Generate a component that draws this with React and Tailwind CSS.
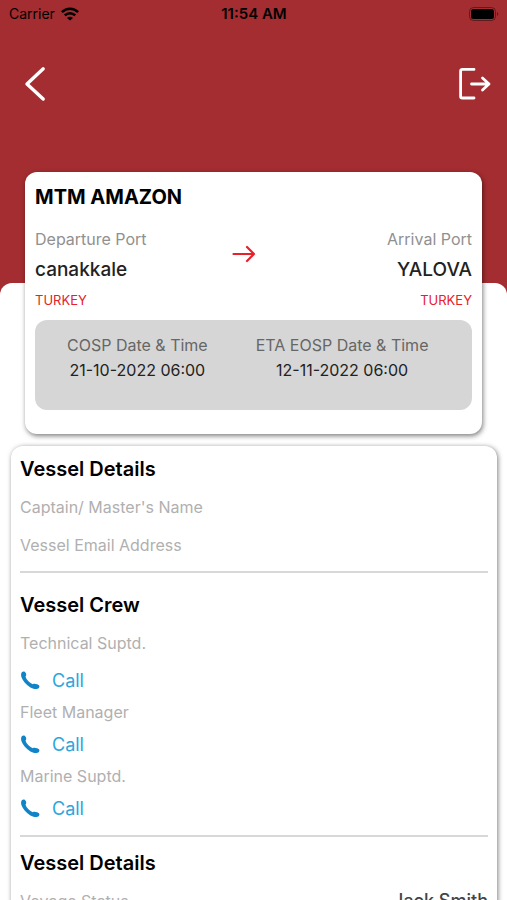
import React from "react";

const crew = [
  { role: "Technical Suptd." },
  { role: "Fleet Manager" },
  { role: "Marine Suptd." },
];

const StatusBar = () => {
  return (
    <div className="h-7 shrink-0 grid grid-cols-3 items-center pl-[9px] pr-2 text-black">
      <div className="flex items-center gap-1.5 text-sm">
        <span>Carrier</span>
        <svg className="w-[18px] h-[14px]" viewBox="0 0 18 14" fill="none" stroke="#000" strokeWidth="2.6">
          <path d="M0.9 5.2C5.4 0.6 12.6 0.6 17.1 5.2" />
          <path d="M3.8 8.4C6.8 5.5 11.2 5.5 14.2 8.4" />
          <path d="M9 13.6L6 10.9C7.8 9.3 10.2 9.3 12 10.9Z" fill="#000" stroke="none" />
        </svg>
      </div>
      <div className="text-center text-[15px] font-semibold">11:54 AM</div>
      <div className="flex justify-end">
        <svg className="w-[30px] h-[14px]" viewBox="0 0 30 14">
          <rect x="0.5" y="0.5" width="26" height="13" rx="4" fill="none" stroke="#000" strokeOpacity="0.4" />
          <rect x="2" y="2" width="23" height="10" rx="2.5" fill="#000" />
          <path d="M28 5C29.6 5.6 29.6 8.4 28 9Z" fill="#000" fillOpacity="0.45" />
        </svg>
      </div>
    </div>
  );
};

const NavBar = () => {
  return (
    <div className="h-28 shrink-0 flex items-center justify-between pl-6 pr-4">
      <button type="button" aria-label="Back">
        <svg className="w-[22px] h-[36px]" viewBox="0 0 22 36" fill="none" stroke="#fff" strokeWidth="3.4" strokeLinecap="round" strokeLinejoin="round">
          <path d="M19.2 2.8L3 18L19.2 33" />
        </svg>
      </button>
      <button type="button" aria-label="Log out">
        <svg className="w-[33px] h-[34px]" viewBox="0 0 33 34" fill="none" stroke="#fff" strokeWidth="2.8" strokeLinecap="round" strokeLinejoin="round">
          <path d="M16 2.4H4.4Q2.6 2.4 2.6 4.2V29.2Q2.6 31 4.4 31H16" />
          <path d="M13.5 17H31M24.5 11L31 17L24.5 23" />
        </svg>
      </button>
    </div>
  );
};

const VoyageCard = () => {
  return (
    <div className="mx-[25px] -mt-[111px] rounded-xl bg-white px-2.5 pt-[11px] pb-6 shadow-[1px_2px_5px_rgba(0,0,0,0.5)]">
      <h1 className="text-xl leading-7 font-bold text-black">MTM AMAZON</h1>

      <div className="mt-[18px] flex">
        <div className="flex-1">
          <p className="text-base leading-5 text-[#909090]">Departure Port</p>
          <p className="mt-[7px] text-[19px] leading-7 font-medium text-[#222]">canakkale</p>
          <p className="mt-1.5 text-[13px] leading-5 text-[#e8202a]">TURKEY</p>
        </div>
        <svg className="mt-4 mr-5 w-6 h-[18px]" viewBox="0 0 24 18" fill="none" stroke="#e8202a" strokeWidth="2.2" strokeLinecap="round" strokeLinejoin="round">
          <path d="M1.5 9H22M15 2L22 9L15 16" />
        </svg>
        <div className="flex-1 text-right">
          <p className="text-base leading-5 text-[#909090]">Arrival Port</p>
          <p className="mt-[7px] text-[19px] leading-7 font-medium text-[#222]">YALOVA</p>
          <p className="mt-1.5 text-[13px] leading-5 text-[#e8202a]">TURKEY</p>
        </div>
      </div>

      <div className="mt-2.5 flex gap-12 rounded-xl bg-[#d6d6d6] px-8 pt-[15px] pb-7 text-center">
        <div>
          <p className="text-base leading-5 text-[#666]">COSP Date &amp; Time</p>
          <p className="mt-[3px] text-base leading-6 text-[#222]">21-10-2022 06:00</p>
        </div>
        <div>
          <p className="text-base leading-5 text-[#666]">ETA EOSP Date &amp; Time</p>
          <p className="mt-[3px] text-base leading-6 text-[#222]">12-11-2022 06:00</p>
        </div>
      </div>
    </div>
  );
};

const CallButton = ({ role }) => {
  return (
    <button type="button" aria-label={`Call ${role}`} className="flex items-center gap-3 text-lg leading-6 text-[#2ba6dc]">
      <svg className="w-5 h-5" viewBox="0 0 20 20" fill="#1184c7">
        <path d="M1.8 1.2C3 0 4.8 0.2 5.6 1.7C6.4 3.2 6.5 4.4 5.5 5.8C6.4 8.6 9.4 11.8 12.6 13.2C14 12.4 15.2 12.6 17.2 13.3C19.6 14.2 20 15.5 18.9 16.9C17 18.7 13.4 18.3 10 16.2C6 13.7 2.6 9.8 1.4 6C0.9 4.2 1 2.2 1.8 1.2Z" />
      </svg>
      <span>Call</span>
    </button>
  );
};

const DetailsCard = () => {
  return (
    <div className="mt-3 ml-[11px] mr-2.5 rounded-xl bg-white px-[9px] pt-[9px] pb-6 shadow-[1px_1px_5px_rgba(0,0,0,0.5)]">
      <section>
        <h2 className="text-xl leading-7 font-semibold text-black">Vessel Details</h2>
        <p className="mt-3.5 text-base leading-5 text-[#b0b0b0]">Captain/ Master's Name</p>
        <p className="mt-[18px] text-base leading-5 text-[#b0b0b0]">Vessel Email Address</p>
      </section>

      <hr className="mt-4 border-t-2 border-[#d8d8d8]" />

      <section className="mt-[18px]">
        <h2 className="text-xl leading-7 font-semibold text-black">Vessel Crew</h2>
        <div className="mt-3.5 flex flex-col gap-[9px]">
          {crew.map((member) => (
            <div key={member.role} className="flex flex-col items-start gap-[11px] first:gap-4">
              <p className="text-base leading-5 text-[#b0b0b0]">{member.role}</p>
              <CallButton role={member.role} />
            </div>
          ))}
        </div>
      </section>

      <hr className="mt-3.5 border-t-2 border-[#d8d8d8]" />

      <section className="mt-3">
        <h2 className="text-xl leading-7 font-semibold text-black">Vessel Details</h2>
        <div className="mt-3.5 flex justify-between">
          <p className="text-base leading-5 text-[#b0b0b0]">Voyage Status</p>
          <p className="text-lg leading-5 font-medium text-[#444]">Jack Smith</p>
        </div>
      </section>
    </div>
  );
};

const App = () => {
  return (
    <div className="h-screen flex flex-col overflow-hidden bg-[#a32d30] font-['Inter','Liberation_Sans',sans-serif]">
      <StatusBar />
      <NavBar />
      <main className="mt-[143px] flex-1 shrink-0 rounded-t-xl bg-white">
        <VoyageCard />
        <DetailsCard />
      </main>
    </div>
  );
};

export default App;
